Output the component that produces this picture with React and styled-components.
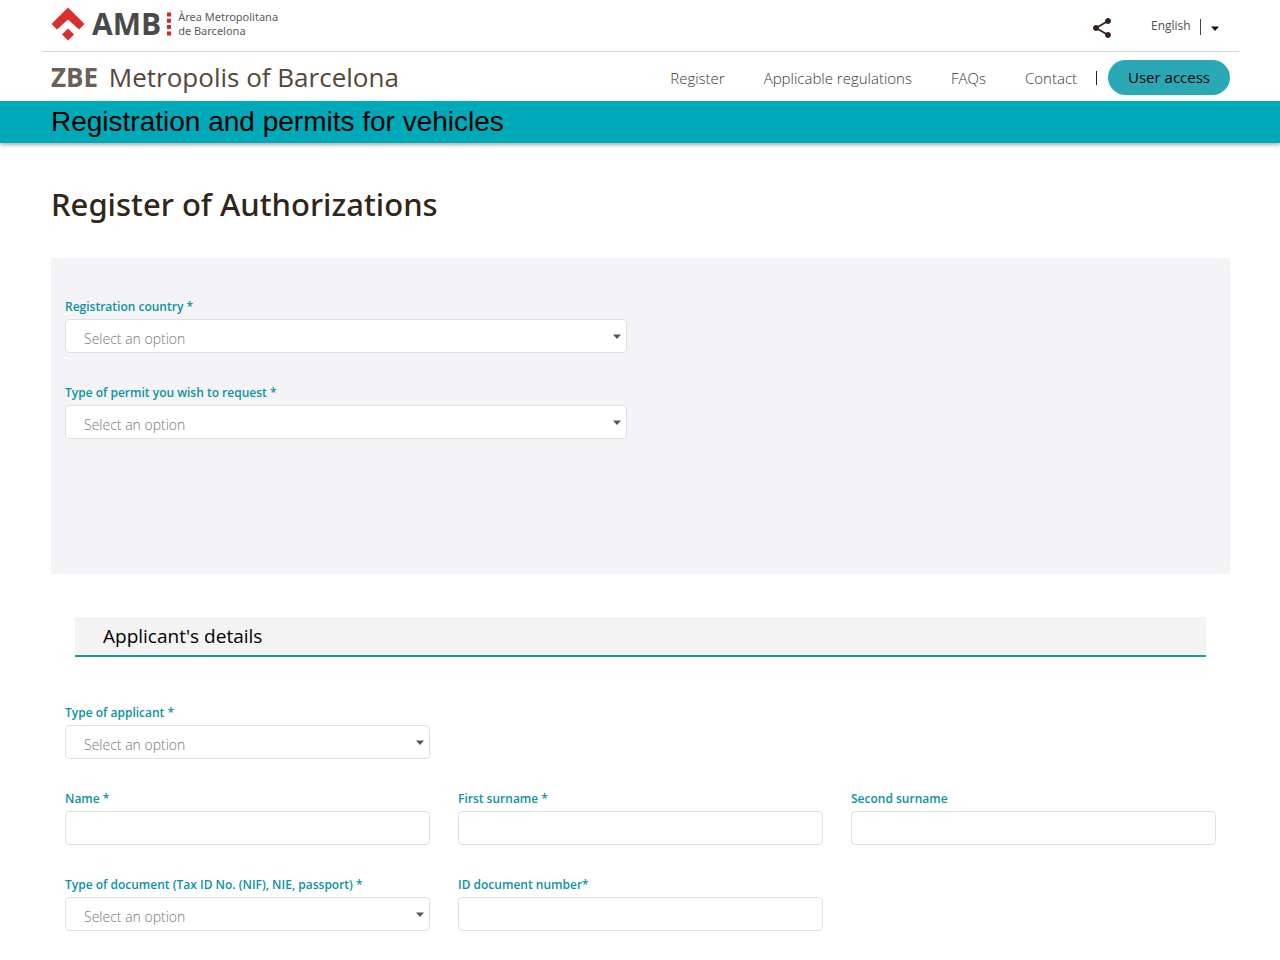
import { useState } from 'react';
import styled, { createGlobalStyle } from 'styled-components';
import { MdShare } from 'react-icons/md';

const GlobalStyle = createGlobalStyle`
  * {
    box-sizing: border-box;
    margin: 0;
    padding: 0;
  }
  body {
    background-color: #fff;
    font-family: 'Open Sans', 'Noto Sans', sans-serif;
    color: #000;
  }
  a {
    color: inherit;
    text-decoration: none;
  }
`;

const TopBar = styled.div`
  display: flex;
  align-items: center;
  justify-content: space-between;
  height: 52px;
  margin: 0 41px 0 42px;
  padding: 0 18px 0 9px;
  border-bottom: 1px solid #d6d9d9;
`;

const Logo = styled.a`
  display: flex;
  align-items: center;
  padding-bottom: 3px;
  color: #4a4a49;
  .name {
    margin-left: 7px;
    font-size: 30px;
    line-height: 32px;
    font-weight: 700;
  }
  .dots {
    margin: 0 7px 0 6px;
  }
  .full {
    font-family: 'Noto Sans', sans-serif;
    font-size: 11px;
    line-height: 14px;
    color: #5c5c5b;
  }
`;

const Tools = styled.div`
  display: flex;
  align-items: center;
  gap: 37px;
  padding-top: 4px;
`;

const ShareButton = styled.button`
  display: flex;
  border: 0;
  background: none;
  color: #33231f;
  font-size: 24px;
`;

const Language = styled.div`
  position: relative;
  select {
    appearance: none;
    display: block;
    width: 70px;
    height: 24px;
    padding-bottom: 4px;
    border: 0;
    background: none;
    font-family: inherit;
    font-size: 12px;
    color: #55504a;
  }
  .line {
    position: absolute;
    left: 49px;
    top: 3px;
    width: 1px;
    height: 16px;
    background-color: #4a4540;
  }
  svg {
    position: absolute;
    right: 2px;
    top: 10px;
    pointer-events: none;
  }
`;

const NavBar = styled.div`
  display: flex;
  align-items: center;
  justify-content: space-between;
  height: 49px;
  padding: 0 50px 0 51px;
`;

const SiteName = styled.a`
  font-size: 26px;
  line-height: 36px;
  color: #54473c;
  strong {
    margin-right: 4px;
    font-weight: 700;
    color: #6b5f56;
  }
`;

const Nav = styled.nav`
  display: flex;
  align-items: center;
  gap: 39px;
  padding-top: 2px;
  font-size: 15px;
  line-height: 20px;
  font-weight: 300;
  color: #40362e;
`;

const Access = styled.div`
  display: flex;
  align-items: center;
  gap: 11px;
  margin-left: -20px;
  .line {
    width: 1px;
    height: 14px;
    background-color: #222;
  }
  a {
    padding: 0 20px;
    border-radius: 18px;
    background-color: #2aa8b6;
    color: #000;
    font-weight: 400;
    line-height: 35px;
  }
`;

const Band = styled.div`
  padding: 0 51px;
  background-color: #00a9b7;
  box-shadow: 0 2px 4px rgba(60, 40, 40, 0.4);
  font-family: 'Liberation Sans', Arial, sans-serif;
  font-size: 28px;
  line-height: 42px;
`;

const Main = styled.main`
  padding: 39px 50px 28px 51px;
  h1 {
    font-family: 'Noto Sans', 'Open Sans', sans-serif;
    font-size: 31px;
    line-height: 44px;
    font-weight: 500;
    color: #30261a;
  }
`;

const Panel = styled.section`
  min-height: 316px;
  margin-top: 32px;
  padding: 39px 14px;
  background-color: #f4f4f6;
`;

const SectionTitle = styled.h2`
  margin: 43px 24px 46px;
  padding-left: 28px;
  border-bottom: 2px solid #1699a6;
  background-color: #f4f4f4;
  font-size: 19px;
  line-height: 38px;
  font-weight: 400;
`;

const Fields = styled.div`
  display: grid;
  grid-template-columns: repeat(${(props) => props.$columns}, 1fr);
  gap: 30px 28px;
`;

const Section = styled.section`
  padding: 0 14px;
`;

const FieldBox = styled.div`
  grid-column-start: ${(props) => (props.$first ? 1 : 'auto')};
  label {
    display: block;
    margin-bottom: 2px;
    font-size: 12px;
    line-height: 20px;
    font-weight: 600;
    color: #0a93a0;
  }
`;

const Control = styled.div`
  position: relative;
  input,
  select {
    display: block;
    width: 100%;
    height: 34px;
    padding: 0 18px;
    border: 1px solid #dde1e6;
    border-radius: 4px;
    background-color: #fff;
    font-family: inherit;
    font-size: 14px;
    font-weight: 300;
    color: #777;
  }
  select {
    appearance: none;
    padding-top: 4px;
  }
  svg {
    position: absolute;
    right: 6px;
    top: 15px;
    pointer-events: none;
  }
`;

const Caret = ({ color = '#555' }) => (
  <svg width="8" height="5" viewBox="0 0 8 5" aria-hidden="true">
    <path d="M0 0.5h8L4 5z" fill={color} />
  </svg>
);

const SelectField = ({ id, label, first }) => {
  const [value, setValue] = useState('');

  return (
    <FieldBox $first={first}>
      <label htmlFor={id}>{label}</label>
      <Control>
        <select
          id={id}
          value={value}
          onChange={(e) => setValue(e.target.value)}
        >
          <option value="">Select an option</option>
        </select>
        <Caret />
      </Control>
    </FieldBox>
  );
};

const TextField = ({ id, label, first }) => {
  const [value, setValue] = useState('');

  return (
    <FieldBox $first={first}>
      <label htmlFor={id}>{label}</label>
      <Control>
        <input
          id={id}
          type="text"
          value={value}
          onChange={(e) => setValue(e.target.value)}
        />
      </Control>
    </FieldBox>
  );
};

const Header = () => (
  <header>
    <TopBar>
      <Logo href="#">
        <svg width="34" height="34" viewBox="0 0 34 34" aria-hidden="true">
          <path
            d="M17 0.5L33.5 17L28 22.5L17 12.5L6 22.5L0.5 17z"
            fill="#da2f2c"
          />
          <path d="M17 21.5L23 27.5L17 33.5L11 27.5z" fill="#da2f2c" />
        </svg>
        <span className="name">AMB</span>
        <svg
          className="dots"
          width="4"
          height="24"
          viewBox="0 0 4 24"
          aria-hidden="true"
        >
          <path
            d="M0 0.5h4v4H0zM0 6.8h4v4H0zM0 13.1h4v4H0zM0 19.4h4v4H0z"
            fill="#d8232a"
          />
        </svg>
        <span className="full">
          Àrea Metropolitana
          <br />
          de Barcelona
        </span>
      </Logo>
      <Tools>
        <ShareButton type="button" aria-label="Share">
          <MdShare />
        </ShareButton>
        <Language>
          <select aria-label="Language" defaultValue="en">
            <option value="en">English</option>
          </select>
          <span className="line" />
          <Caret color="#111" />
        </Language>
      </Tools>
    </TopBar>
    <NavBar>
      <SiteName href="#">
        <strong>ZBE</strong> Metropolis of Barcelona
      </SiteName>
      <Nav>
        <a href="#">Register</a>
        <a href="#">Applicable regulations</a>
        <a href="#">FAQs</a>
        <a href="#">Contact</a>
        <Access>
          <span className="line" />
          <a href="#">User access</a>
        </Access>
      </Nav>
    </NavBar>
    <Band>Registration and permits for vehicles</Band>
  </header>
);

const App = () => {
  return (
    <>
      <GlobalStyle />
      <Header />
      <Main>
        <h1>Register of Authorizations</h1>
        <form onSubmit={(e) => e.preventDefault()}>
          <Panel>
            <Fields $columns={2}>
              <SelectField id="country" label="Registration country *" first />
              <SelectField
                id="permit"
                label="Type of permit you wish to request *"
                first
              />
            </Fields>
          </Panel>
          <SectionTitle>Applicant's details</SectionTitle>
          <Section>
            <Fields $columns={3}>
              <SelectField id="applicant" label="Type of applicant *" first />
              <TextField id="name" label="Name *" first />
              <TextField id="surname" label="First surname *" />
              <TextField id="surname2" label="Second surname" />
              <SelectField
                id="doctype"
                label="Type of document (Tax ID No. (NIF), NIE, passport) *"
                first
              />
              <TextField id="docnumber" label="ID document number*" />
            </Fields>
          </Section>
        </form>
      </Main>
    </>
  );
};

export default App;
